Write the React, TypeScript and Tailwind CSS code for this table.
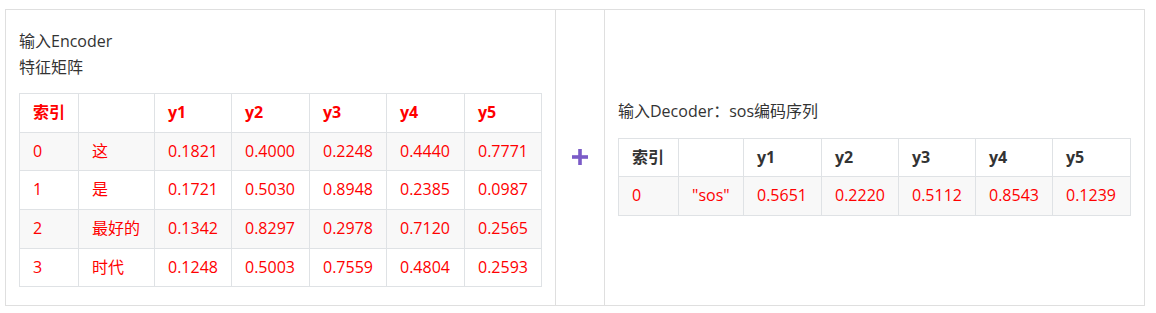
import React from 'react';

const leftCols = [59, 76, 77, 78, 77, 78, 77];
const rightCols = [60, 65, 78, 77, 77, 77, 78];

const leftHead = ['索引', '', 'y1', 'y2', 'y3', 'y4', 'y5'];
const leftRows = [
  ['0', '这', '0.1821', '0.4000', '0.2248', '0.4440', '0.7771'],
  ['1', '是', '0.1721', '0.5030', '0.8948', '0.2385', '0.0987'],
  ['2', '最好的', '0.1342', '0.8297', '0.2978', '0.7120', '0.2565'],
  ['3', '时代', '0.1248', '0.5003', '0.7559', '0.4804', '0.2593'],
];

const rightHead = ['索引', '', 'y1', 'y2', 'y3', 'y4', 'y5'];
const rightRows = [['0', '"sos"', '0.5651', '0.2220', '0.5112', '0.8543', '0.1239']];

function DataTable({
  cols,
  head,
  rows,
  headClass,
}: {
  cols: number[];
  head: string[];
  rows: string[][];
  headClass: string;
}) {
  const total = cols.reduce((a, b) => a + b, 0);
  return (
    <table className="border-collapse table-fixed" style={{ width: total + 1 }}>
      <colgroup>
        {cols.map((w, i) => (
          <col key={i} style={{ width: w }} />
        ))}
      </colgroup>
      <thead>
        <tr className="bg-white">
          {head.map((h, i) => (
            <th key={i} className={`border border-[#dfe2e5] px-[13px] py-[6px] text-left font-bold whitespace-nowrap ${headClass}`}>
              {h}
            </th>
          ))}
        </tr>
      </thead>
      <tbody>
        {rows.map((r, ri) => (
          <tr key={ri} className={ri % 2 === 0 ? 'bg-[#f8f8f8]' : 'bg-white'}>
            {r.map((c, ci) => (
              <td key={ci} className="border border-[#dfe2e5] px-[13px] py-[6px] text-[#ff0000] whitespace-nowrap">
                {c}
              </td>
            ))}
          </tr>
        ))}
      </tbody>
    </table>
  );
}

export default function App() {
  return (
    <div
      className="bg-white w-[1156px] h-[313px] pt-[9px] pl-[5px] text-[16px] leading-[1.6] text-[#333]"
      style={{ fontFamily: '"Open Sans", "Noto Sans CJK SC", sans-serif' }}
    >
      <div className="w-[1140px] border border-[#dfdfdf] flex">
        {/* encoder side */}
        <div className="w-[550px] border-r border-[#dfdfdf] pl-[13px] pt-[19px] pb-[18px] flex flex-col">
          <div>输入Encoder</div>
          <div>特征矩阵</div>
          <div className="mt-[13px]">
            <DataTable cols={leftCols} head={leftHead} rows={leftRows} headClass="text-[#ff0000]" />
          </div>
        </div>

        {/* plus */}
        <div className="w-[49px] border-r border-[#dfdfdf] flex items-center justify-center">
          <svg width="16" height="16" viewBox="0 0 16 16" className="ml-[-1px] mt-[-1px]">
            <rect x="0" y="6.2" width="16" height="3.6" fill="#7b5bc7" />
            <rect x="6.2" y="0" width="3.6" height="16" fill="#7b5bc7" />
          </svg>
        </div>

        {/* decoder side */}
        <div className="w-[539px] pl-[13px] flex flex-col justify-center">
          <div>输入Decoder：sos编码序列</div>
          <div className="mt-[13px]">
            <DataTable cols={rightCols} head={rightHead} rows={rightRows} headClass="text-[#333]" />
          </div>
        </div>
      </div>
    </div>
  );
}
